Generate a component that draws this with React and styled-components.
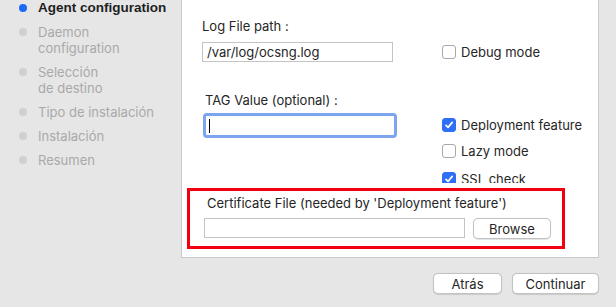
import React from 'react'
import styled, { createGlobalStyle } from 'styled-components'

const Global = createGlobalStyle`
  html, body {
    margin: 0;
    padding: 0;
    background: #e6e6e6;
    font-family: Inter, "Noto Sans", "Liberation Sans", sans-serif;
    font-size: 13px;
    color: #262626;
  }
`
const Page = styled.div`
  display: flex;
  width: 616px;
  height: 307px;
  overflow: hidden;
  background: #e6e6e6;
`
const Sidebar = styled.ul`
  list-style: none;
  margin: 0;
  padding: 0 0 0 19px;
  width: 162px;
`
const Step = styled.li`
  display: flex;
  align-items: flex-start;
  gap: 7px;
  line-height: 16px;
  margin-top: ${p => p.first ? '0' : '8px'};
  color: ${p => p.active ? '#1f1f1f' : '#a9a9a9'};
  ${p => p.active && `
    font-family: "Liberation Sans", Arial, sans-serif;
    font-weight: 700;
    font-size: 13.5px;
  `}
`
const Dot = styled.span`
  flex: none;
  width: 8px;
  height: 8px;
  border-radius: 50%;
  margin-top: 4px;
  margin-right: 4px;
  background: ${p => p.active ? '#1a6cf6' : '#d0d0d0'};
`
const Main = styled.div`
  display: flex;
  flex-direction: column;
`
const Panel = styled.div`
  width: 416px;
  height: 257px;
  background: #fff;
  border: 1px solid #c9c9c9;
  border-top: none;
`
const Top = styled.div`
  display: flex;
  height: 183px;
  margin-bottom: 5px;
  overflow: hidden;
  padding-left: 20px;
`
const LeftCol = styled.div`
  display: flex;
  flex-direction: column;
  width: 240px;
`
const RightCol = styled.div`
  display: flex;
  flex-direction: column;
  padding-top: 42px;
`
const Label = styled.div`
  line-height: 16px;
  margin-top: ${p => p.top}px;
  margin-left: ${p => p.indent || 0}px;
`
const TextBox = styled.div`
  box-sizing: border-box;
  width: ${p => p.width}px;
  height: 20px;
  margin-top: ${p => p.top || 0}px;
  border: 1px solid #c4c4c4;
  background: #fff;
  padding: 0 4px;
  line-height: 18px;
  font-size: 13px;
`
const FocusBox = styled.div`
  box-sizing: border-box;
  width: 194px;
  height: 25px;
  margin-top: 5px;
  margin-left: 1px;
  border: 3px solid #7ca5ee;
  border-radius: 4px;
  background: #fff;
  display: flex;
  align-items: center;
  padding-left: 3px;
`
const Caret = styled.span`
  width: 1px;
  height: 14px;
  background: #000;
`
const Check = styled.label`
  display: flex;
  align-items: center;
  gap: 5px;
  height: 20px;
  flex: none;
  margin-top: ${p => p.top || 0}px;
  line-height: 16px;
`
const Box = styled.span`
  box-sizing: border-box;
  width: 14px;
  height: 14px;
  border-radius: 3px;
  display: flex;
  align-items: center;
  justify-content: center;
  background: ${p => p.on ? '#2f6ff5' : '#fff'};
  border: 1px solid ${p => p.on ? '#2f6ff5' : '#a8a8a8'};
`
const CertBox = styled.div`
  box-sizing: border-box;
  width: 378px;
  height: 61px;
  margin-left: 5px;
  border: 3px solid #f2000f;
  padding: 4px 0 0 17px;
`
const CertRow = styled.div`
  display: flex;
  gap: 8px;
  margin-top: 7px;
  margin-left: -3px;
`
const Button = styled.button`
  box-sizing: border-box;
  width: ${p => p.width}px;
  height: 21px;
  padding: 0;
  border: 1px solid #c2c2c2;
  border-radius: 5px;
  background: #fff;
  font-family: inherit;
  font-size: 13px;
  color: #262626;
  box-shadow: 0 0.5px 1px rgba(0, 0, 0, 0.12);
`
const Footer = styled.div`
  display: flex;
  justify-content: flex-end;
  gap: 10px;
  padding-top: 15px;
`

const Tick = () => (
  <svg width="10" height="10" viewBox="0 0 10 10">
    <path d="M2 5.3 L4.1 7.4 L8.2 2.4" fill="none" stroke="#fff" strokeWidth="1.7" strokeLinecap="round" strokeLinejoin="round" />
  </svg>
)

const CheckItem = ({ on, top, children }) => (
  <Check top={top}>
    <Box on={on}>{on && <Tick />}</Box>
    {children}
  </Check>
)

const steps = [
  ['Agent configuration'],
  ['Daemon', 'configuration'],
  ['Selección', 'de destino'],
  ['Tipo de instalación'],
  ['Instalación'],
  ['Resumen']
]

const App = () => {
  return (
    <Page>
      <Global />
      <Sidebar>
        {steps.map((lines, i) => (
          <Step key={i} first={i === 0} active={i === 0}>
            <Dot active={i === 0} />
            <div>
              {lines.map(l => <div key={l}>{l}</div>)}
            </div>
          </Step>
        ))}
      </Sidebar>
      <Main>
        <Panel>
          <Top>
            <LeftCol>
              <Label top={18}>Log File path :</Label>
              <TextBox width={191} top={8}>/var/log/ocsng.log</TextBox>
              <Label top={30} indent={3}>TAG Value (optional) :</Label>
              <FocusBox><Caret /></FocusBox>
            </LeftCol>
            <RightCol>
              <CheckItem>Debug mode</CheckItem>
              <CheckItem on top={53}>Deployment feature</CheckItem>
              <CheckItem top={6}>Lazy mode</CheckItem>
              <CheckItem on top={8}>SSL check</CheckItem>
            </RightCol>
          </Top>
          <CertBox>
            <Label top={0}>Certificate File (needed by 'Deployment feature')</Label>
            <CertRow>
              <TextBox width={261} />
              <Button width={78}>Browse</Button>
            </CertRow>
          </CertBox>
        </Panel>
        <Footer>
          <Button width={69}>Atrás</Button>
          <Button width={87}>Continuar</Button>
        </Footer>
      </Main>
    </Page>
  )
}

export default App
